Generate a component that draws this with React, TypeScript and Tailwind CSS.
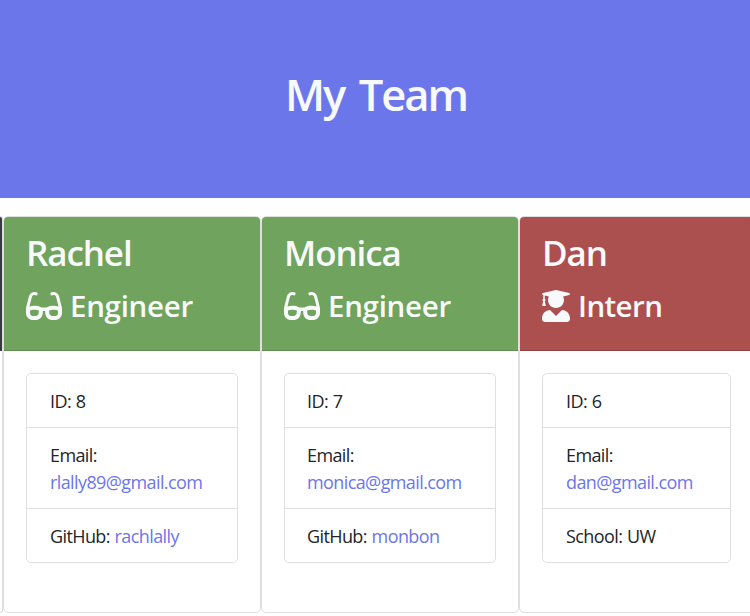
import { FaGlasses, FaUserGraduate } from "react-icons/fa";

type Member = { name: string; role: string; id: number; email: string; label: string; value: string; link: boolean; head: string; width: string; inset: string };

const team: Member[] = [
  { name: "Rachel", role: "Engineer", id: 8, email: "rlally89@gmail.com", label: "GitHub:", value: "rachlally", link: true, head: "bg-[#70a35e]", width: "w-[258px]", inset: "px-[23px]" },
  { name: "Monica", role: "Engineer", id: 7, email: "monica@gmail.com", label: "GitHub:", value: "monbon", link: true, head: "bg-[#70a35e]", width: "w-[258px]", inset: "px-[22px]" },
  { name: "Dan", role: "Intern", id: 6, email: "dan@gmail.com", label: "School:", value: "UW", link: false, head: "bg-[#ab4f4f]", width: "w-[235px]", inset: "px-[23px]" },
];

function Card({ m }: { m: Member }) {
  return (
    <section className={`${m.width} h-[397px] shrink-0 overflow-hidden rounded-[5px] border border-[#dfdfdf] bg-white`}>
      <header className={`${m.head} h-[134px] border-b border-black/15 px-[22px] pt-[13px] text-[#f8f9fa]`}>
        <h2 className="h-[46px] text-[35px] leading-[45px] font-semibold tracking-[-1.1px]">{m.name}</h2>
        <h3 className="mt-[11px] flex h-[40px] items-center text-[29.5px] leading-[40px] font-semibold tracking-[-0.3px]">
          {m.role === "Intern" ? <FaUserGraduate className="mr-[8px] mb-[2px] h-[32px] w-[28px]" /> : <FaGlasses className="mr-[8px] mb-[2px] h-[32px] w-[36px]" />}
          <span className={m.role === "Intern" ? "-mt-[2px] tracking-[-0.6px]" : "-mt-[2px]"}>{m.role}</span>
        </h3>
      </header>
      <ul className="mx-[22px] mt-[22px] rounded-[5px] border border-[#dfdfdf] text-[18px] leading-[27px] tracking-[-0.6px] [word-spacing:0.6px] text-[#212529]">
        <li className={`${m.inset} h-[54px] border-b border-[#dfdfdf] pt-[14px]`}>ID: {m.id}</li>
        <li className={`${m.inset} h-[81px] border-b border-[#dfdfdf] pt-[14px]`}>Email:<br /><a className="text-[#6c76eb]">{m.email}</a></li>
        <li className={`${m.inset} h-[53px] pt-[14px]`}>{m.label} <span className={m.link ? "text-[#6c76eb]" : ""}>{m.value}</span></li>
      </ul>
    </section>
  );
}

export default function App() {
  return (
    <div className="h-[616px] w-[750px] overflow-hidden bg-white font-['Open_Sans',sans-serif]">
      <header className="flex h-[198px] items-start justify-center bg-[#6c76eb] pt-[65px] text-[43.5px] leading-[60px] font-semibold tracking-[-2px] [word-spacing:5px] text-[#f8f9fa]"><h1 className="pl-[2px]">My Team</h1></header>
      <main className="flex pt-[18px]">
        <section className="h-[397px] w-[3px] shrink-0 overflow-hidden rounded-r-[5px] border-y border-r border-[#dfdfdf]"><div className="h-[134px] bg-[#343a40]" /></section>
        {team.map((m) => <Card key={m.name} m={m} />)}
      </main>
    </div>
  );
}
